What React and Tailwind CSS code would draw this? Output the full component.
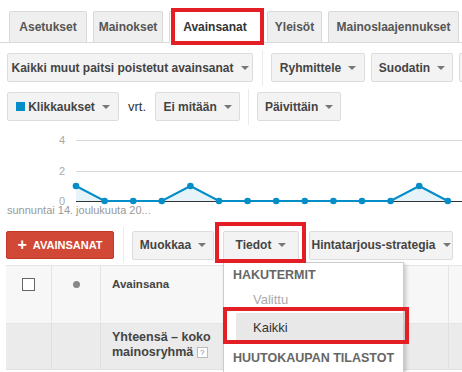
import React from "react";

const Arrow = () => (
  <span className="inline-block w-0 h-0 border-l-[4px] border-r-[4px] border-t-[4px] border-l-transparent border-r-transparent border-t-[#777]" />
);

const Btn = ({ className = "", children, arrow = true }) => (
  <div
    className={`h-[29px] shrink-0 flex items-center justify-center gap-[7px] rounded-[2px] border border-[#dcdcdc] bg-[#f3f3f3] text-[12px] font-bold text-[#444] whitespace-nowrap overflow-hidden ${className}`}
  >
    {children}
    {arrow && <Arrow />}
  </div>
);

// separator is taller than the buttons but the row height is fixed
const Sep = ({ className = "" }) => (
  <div className={`w-px h-[36px] bg-[#ebebeb] shrink-0 ${className}`} />
);

const points = [1, 0, 0, 0, 1, 0, 0, 0, 0, 0, 0, 0, 1, 0];

export default function App() {
  // chart coords are local to the svg (top = page y 125)
  const xs = points.map((_, i) => 76 + i * 28.6);
  const ys = points.map((v) => (v ? 61 : 76));
  const line = xs.map((x, i) => `${x},${ys[i]}`).join(" ");
  const area = `76,76 ${line} ${xs[xs.length - 1]},76`;

  return (
    <div className="relative w-[462px] h-[372px] overflow-hidden bg-white font-['Liberation_Sans',Arial,sans-serif]">
      {/* Tabs */}
      <div className="flex items-end pt-[11px] pl-[9px] gap-[6px] border-b border-[#d9d9d9] h-[43px]">
        {[
          ["Asetukset", "w-[78px]"],
          ["Mainokset", "w-[70px]"],
          ["Avainsanat", "w-[92px]", true],
          ["Yleisöt", "w-[55px]"],
          ["Mainoslaajennukset", "w-[131px]"],
        ].map(([label, w, active]) => (
          <div
            key={label}
            className={`${w} h-[32px] -mb-px shrink-0 flex items-center justify-center text-[12px] font-bold border border-[#d9d9d9] rounded-t-[2px] ${
              active ? "bg-white border-b-white text-[#333]" : "bg-[#efefef] text-[#555]"
            }`}
          >
            {label}
          </div>
        ))}
      </div>

      {/* Filters */}
      <div className="flex items-center h-[29px] pl-[7px] mt-[10px]">
        <Btn className="w-[246px]">Kaikki muut paitsi poistetut avainsanat</Btn>
        <Sep className="ml-[9px]" />
        <Btn className="w-[94px] ml-[8px]">Ryhmittele</Btn>
        <Btn className="w-[82px] ml-[6px]">Suodatin</Btn>
        <Btn className="w-[40px] ml-[6px]" arrow={false} />
      </div>

      {/* Metrics */}
      <div className="flex items-center h-[29px] pl-[7px] mt-[10px]">
        <Btn className="w-[112px] gap-[6px]">
          <span className="flex items-center gap-[3px]">
            <span className="w-[9px] h-[9px] bg-[#058dc7]" />
            Klikkaukset
          </span>
        </Btn>
        <span className="ml-[9px] text-[13px] text-[#333]">vrt.</span>
        <Btn className="w-[85px] ml-[9px]">Ei mitään</Btn>
        <Sep className="ml-[8px]" />
        <Btn className="w-[84px] ml-[8px]">Päivittäin</Btn>
      </div>

      {/* Chart */}
      <svg width="462" height="95" className="block mt-[4px]">
        <line x1="76" y1="15.5" x2="462" y2="15.5" stroke="#d9d9d9" />
        <line x1="76" y1="46.5" x2="462" y2="46.5" stroke="#d9d9d9" />
        <line x1="76" y1="76.5" x2="462" y2="76.5" stroke="#333" />
        <polygon points={area} fill="#058dc7" fillOpacity="0.1" />
        <polyline points={line} fill="none" stroke="#058dc7" strokeWidth="2" />
        {xs.map((x, i) => (
          <circle key={i} cx={x} cy={ys[i]} r="3.3" fill="#058dc7" />
        ))}
        <g fill="#aaa" fontSize="11" fontFamily="Liberation Sans, Arial, sans-serif" textAnchor="end">
          <text x="65" y="19">4</text>
          <text x="65" y="50">2</text>
          <text x="65" y="80">0</text>
        </g>
        <text x="7" y="89" fill="#999" fontSize="11" fontFamily="Liberation Sans, Arial, sans-serif">
          sunnuntai 14. joulukuuta 20...
        </text>
      </svg>

      {/* Actions */}
      <div className="flex items-center h-[28px] pl-[6px] mt-[11px]">
        <div className="w-[108px] h-[28px] shrink-0 flex items-center justify-center gap-[6px] rounded-[2px] bg-[#d14836] border border-[#c53727] text-white font-bold text-[11px]">
          <span className="text-[16px] leading-none">+</span>
          AVAINSANAT
        </div>
        <Sep className="ml-[9px]" />
        <Btn className="w-[82px] ml-[8px] h-[28px]">Muokkaa</Btn>
        <Btn className="w-[76px] ml-[9px] h-[28px] border-[#4d90fe] bg-[#eeeeee] text-[#333]">Tiedot</Btn>
        <Btn className="w-[144px] ml-[10px] h-[28px]">Hintatarjous-strategia</Btn>
      </div>

      {/* Table */}
      <div className="ml-[6px] mt-[6px] border-t border-[#e5e5e5]">
        <div className="flex h-[58px] bg-[#f7f7f7] border-b border-[#e5e5e5]">
          <div className="w-[46px] border-r border-[#e5e5e5] flex justify-center pt-[12px]">
            <div className="w-[13px] h-[13px] border border-[#666] bg-white" />
          </div>
          <div className="w-[49px] border-r border-[#e5e5e5] flex justify-center pt-[15px]">
            <div className="w-[7px] h-[7px] rounded-full bg-[#888]" />
          </div>
          <div className="w-[348px] border-r border-[#e5e5e5] pl-[11px] pt-[10px] text-[11.5px] font-bold text-[#444]">
            Avainsana
          </div>
          <div className="flex-1" />
        </div>
        <div className="flex h-[46px] bg-[#ebebeb] border-b border-[#e0e0e0]">
          <div className="w-[46px] border-r border-[#e0e0e0]" />
          <div className="w-[49px] border-r border-[#e0e0e0]" />
          <div className="w-[348px] border-r border-[#e0e0e0] pl-[11px] pt-[6px] text-[12.5px] leading-[15px] font-bold text-[#444]">
            Yhteensä – koko
            <br />
            mainosryhmä{" "}
            <span className="inline-flex items-center justify-center w-[11px] h-[11px] border border-[#bbb] bg-white text-[8px] font-normal text-[#888] align-middle">
              ?
            </span>
          </div>
          <div className="flex-1" />
        </div>
      </div>

      {/* Dropdown menu */}
      <div className="absolute left-[223px] top-[262px] w-[181px] h-[120px] bg-white border border-[#ccc] shadow-[2px_2px_4px_rgba(0,0,0,0.2)]">
        <div className="h-[24px] flex items-center pl-[9px] text-[12.5px] font-bold text-[#666]">HAKUTERMIT</div>
        <div className="h-[26px] flex items-center pl-[29px] text-[13px] text-[#aaa]">Valittu</div>
        <div className="h-[29px] flex items-center ml-[12px] pl-[17px] bg-[#e8e8e8] text-[13px] text-[#333]">Kaikki</div>
        <div className="h-[32px] flex items-center pl-[9px] text-[12.5px] font-bold text-[#666]">HUUTOKAUPAN TILASTOT</div>
      </div>

      {/* Annotation boxes */}
      <div className="absolute left-[171px] top-[8px] w-[93px] h-[37px] border-4 border-[#e31e24]" />
      <div className="absolute left-[215px] top-[222px] w-[91px] h-[41px] border-4 border-[#e31e24]" />
      <div className="absolute left-[223px] top-[307px] w-[186px] h-[37px] border-4 border-[#e31e24]" />
    </div>
  );
}
